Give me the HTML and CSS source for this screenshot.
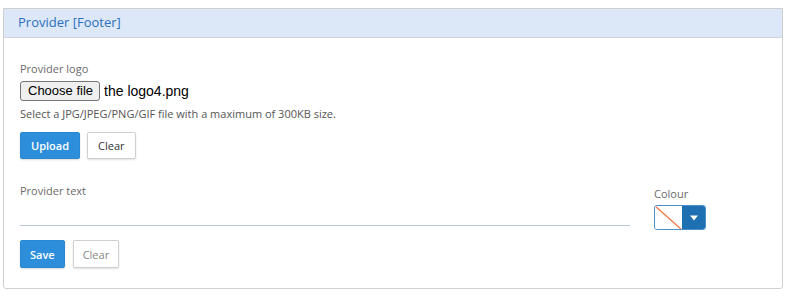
FILE: index.html
```html
<!DOCTYPE html>
<html>
<head>
<meta charset="utf-8">
<link rel="stylesheet" href="styles.css">
</head>
<body>
<div class="panel">
  <div class="panel-head">Provider [Footer]</div>
  <div class="panel-body">
    <div class="field">
      <div class="label">Provider logo</div>
      <div class="file-row"><span class="file-btn">Choose file</span><span class="file-name">the logo4.png</span></div>
      <div class="help">Select a JPG/JPEG/PNG/GIF file with a maximum of 300KB size.</div>
      <div class="btns">
        <button class="btn btn-primary">Upload</button>
        <button class="btn btn-default">Clear</button>
      </div>
    </div>
    <div class="text-row">
      <div class="text-field">
        <div class="label">Provider text</div>
        <div class="line-input"></div>
      </div>
      <div class="colour-field">
        <div class="label">Colour</div>
        <div class="picker">
          <span class="swatch"><svg width="26" height="23" viewBox="0 0 26 23"><line x1="0" y1="0" x2="26" y2="23" stroke="#f0703a" stroke-width="1.3"/></svg></span>
          <span class="caret"><svg width="8" height="6" viewBox="0 0 8 6"><path d="M0 0.5 L8 0.5 L4 5.5 Z" fill="#fff"/></svg></span>
        </div>
      </div>
    </div>
    <div class="btns btns-save">
      <button class="btn btn-primary">Save</button>
      <button class="btn btn-default btn-muted">Clear</button>
    </div>
  </div>
</div>
</body>
</html>
```
FILE: styles.css
```css
html, body { margin: 0; padding: 0; background: #fff; }
body { padding: 8px 9px 0 3px; font-family: "Open Sans", sans-serif; }
.panel {
  width: 778px;
  height: 279px;
  border: 1px solid #cfcfcf;
  border-radius: 0 0 3px 3px;
}
.panel-head {
  height: 28px;
  line-height: 27px;
  background: #dce8f7;
  border-bottom: 1px solid #cfd6df;
  color: #2c6fbe;
  font-size: 13px;
  padding-left: 14px;
}
.panel-body { padding: 23px 16px 0 16px; }
.label { font-size: 11px; color: #6b6b6b; line-height: 15px; }
.file-row { display: flex; align-items: center; margin-top: 5px; height: 20px; }
.file-btn {
  font-family: "Liberation Sans", Arial, sans-serif;
  font-size: 13px;
  box-sizing: border-box;
  height: 20px;
  line-height: 18px;
  padding: 0 6px 0 7px;
  background: #efefef;
  border: 1px solid #767676;
  border-radius: 3px;
  color: #000;
}
.file-name {
  font-family: "Liberation Sans", Arial, sans-serif;
  font-size: 14px;
  margin-left: 4px;
  color: #000;
}
.help { font-size: 11px; color: #555; margin-top: 5px; line-height: 15px; }
.btns { display: flex; gap: 7px; margin-top: 11px; }
.btn {
  font-family: "Open Sans", sans-serif;
  font-size: 11px;
  height: 27px;
  box-sizing: border-box;
  border-radius: 2px;
  padding: 0 10px;
  cursor: pointer;
}
.btn-primary {
  background: #2d8fdb;
  color: #fff;
  border: 1px solid #2a87d0;
  font-weight: 600;
  box-shadow: 0 1px 2px rgba(0,0,0,0.15);
}
.btn-default {
  background: #fff;
  color: #333;
  border: 1px solid #cfcfcf;
  box-shadow: 0 1px 2px rgba(0,0,0,0.12);
  padding: 0 10px;
}
.btn-muted { color: #888; }
.text-row { display: flex; margin-top: 24px; }
.text-field { width: 610px; }
.line-input { height: 23px; border-bottom: 1px solid #b8c6d4; margin-top: 4px; }
.colour-field { margin-left: 24px; padding-top: 3px; }
.picker {
  display: flex;
  margin-top: 4px;
  width: 52px;
  height: 25px;
  box-sizing: border-box;
  border: 1px solid #4a90c8;
  border-radius: 3px;
  overflow: hidden;
}
.swatch { width: 27px; height: 23px; background: #fff; display: block; }
.swatch svg { display: block; }
.caret {
  flex: 1;
  background: #1f6fb3;
  display: flex;
  align-items: center;
  justify-content: center;
}
.btns-save { margin-top: 10px; gap: 8px; }
.btns-save .btn { height: 28px; padding: 0 9px; }
```
